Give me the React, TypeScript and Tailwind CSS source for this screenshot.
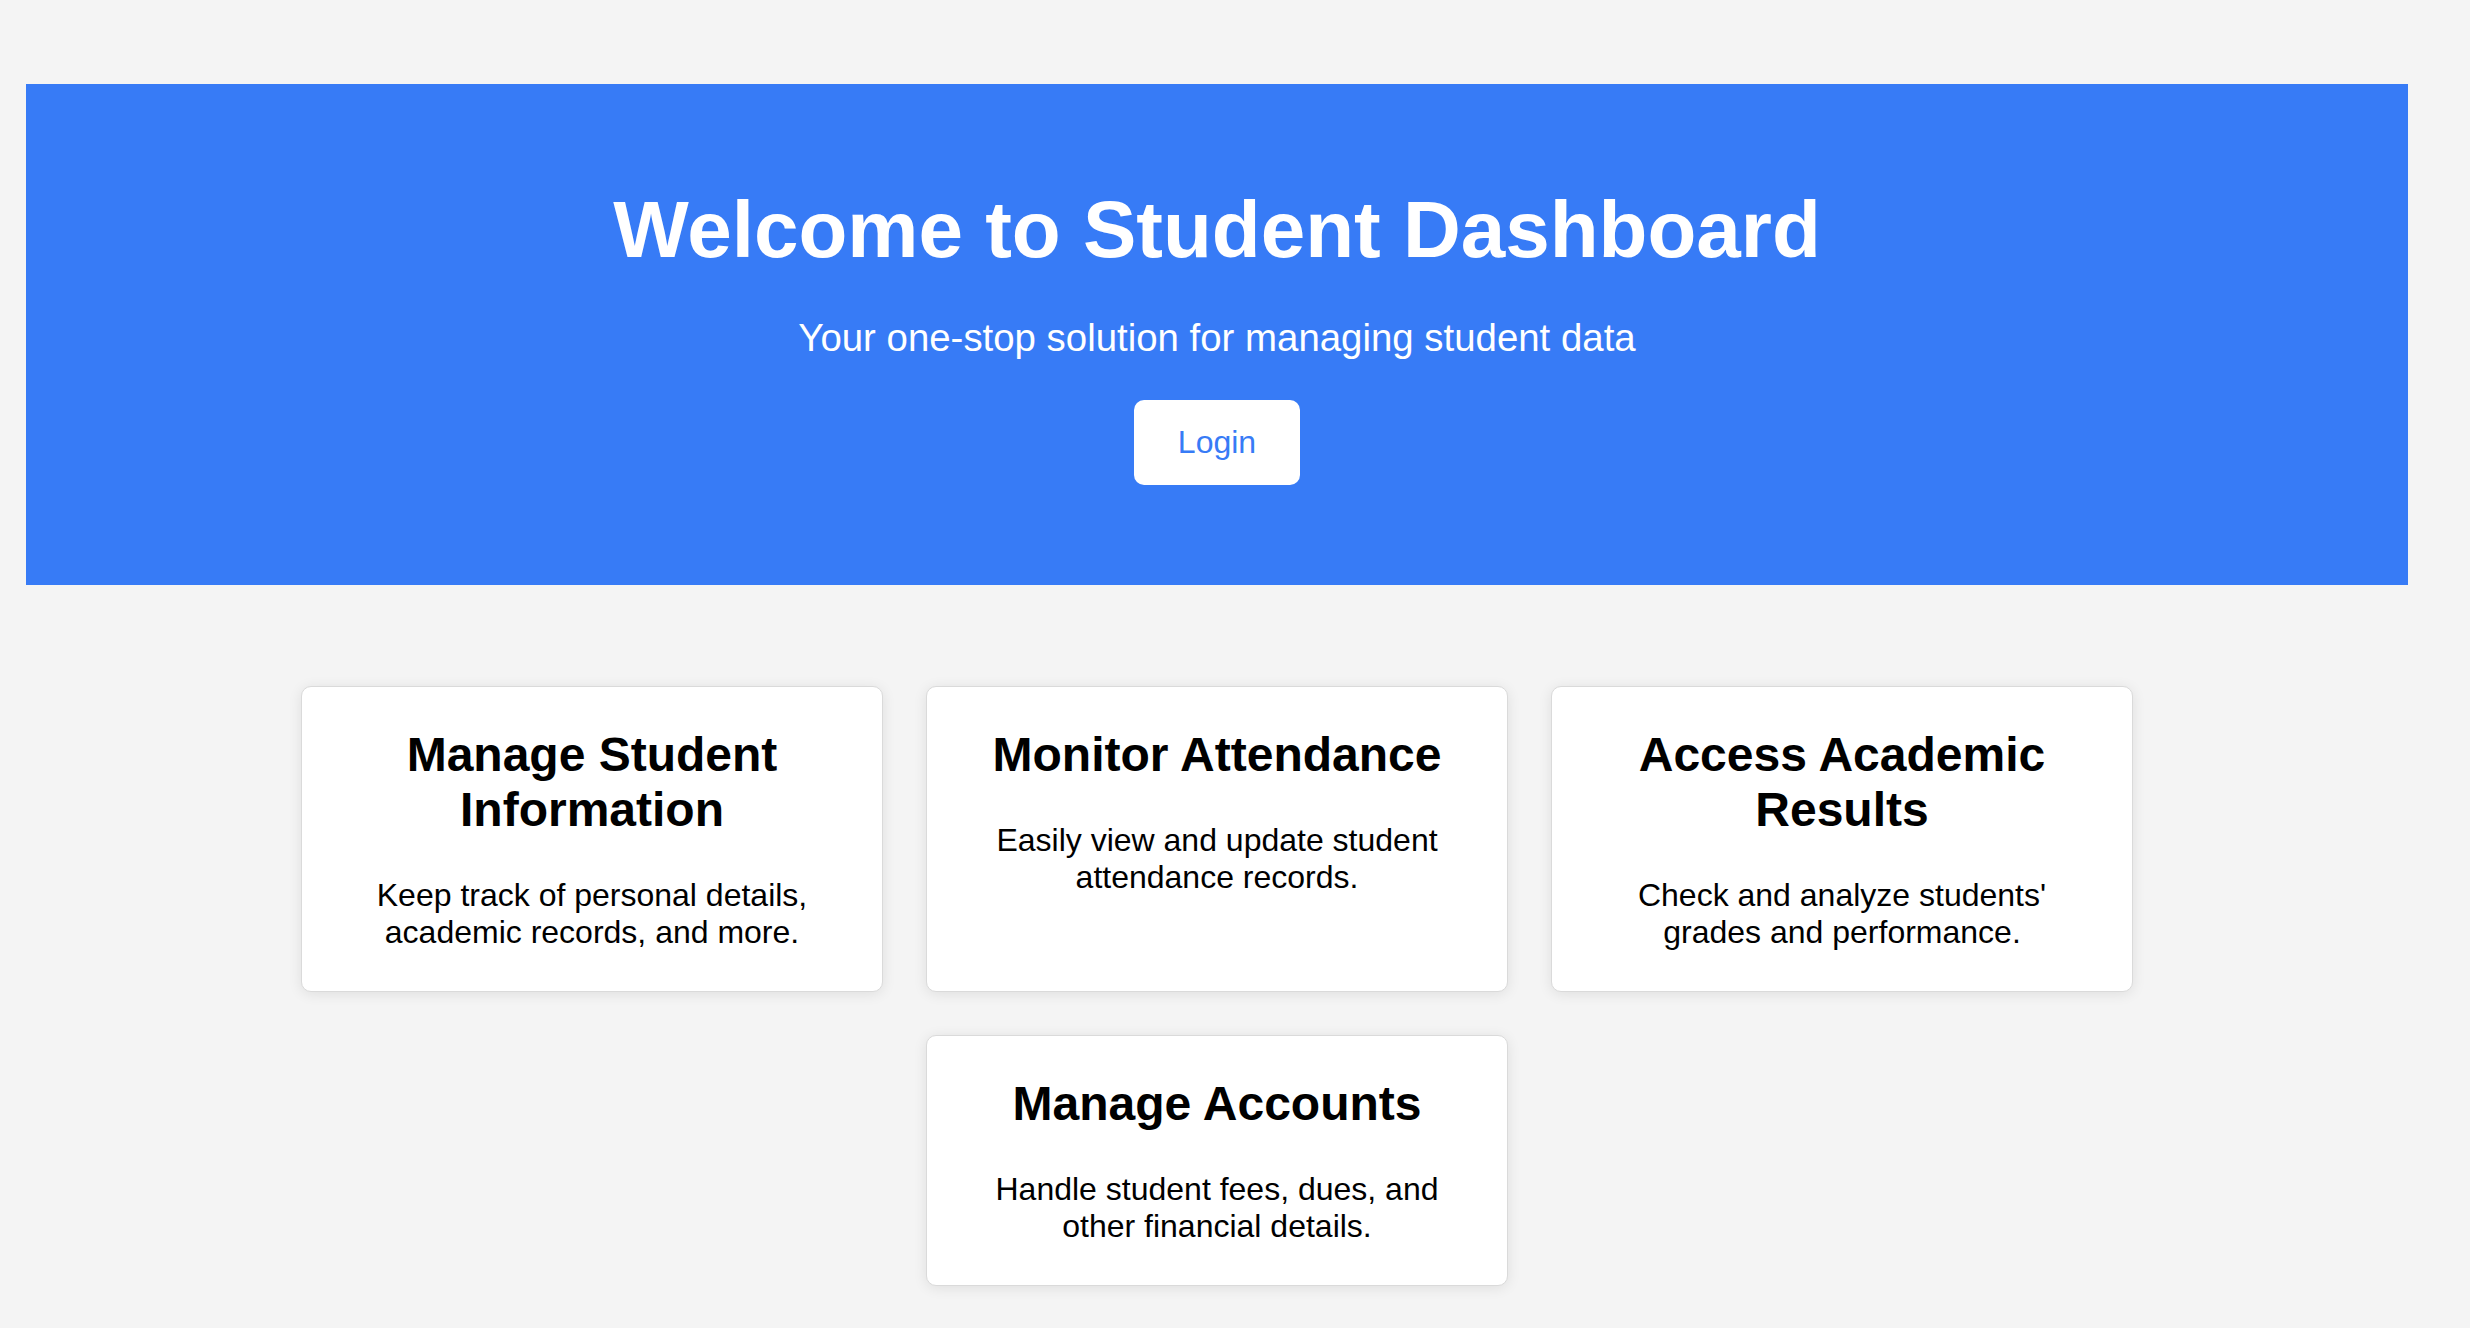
const features = [
   {
      title: "Manage Student Information",
      text: "Keep track of personal details, academic records, and more.",
   },
   {
      title: "Monitor Attendance",
      text: "Easily view and update student attendance records.",
   },
   {
      title: "Access Academic Results",
      text: "Check and analyze students' grades and performance.",
   },
   {
      title: "Manage Accounts",
      text: "Handle student fees, dues, and other financial details.",
   },
];

const FeatureCard = ({ title, text }: { title: string; text: string }) => (
   <div
      className={`
         w-[582px] p-[40px] bg-white text-center text-black
         border border-[#dadada] rounded-[10px]
         shadow-[0_2px_14px_rgba(0,0,0,0.09)]
      `}
   >
      <h3 className="m-0 text-[48px] leading-[1.15] font-bold">{title}</h3>
      <p className="mt-[40px] text-[32px] leading-[1.15]">{text}</p>
   </div>
);

export default function App() {
   return (
      <div
         className="min-h-screen bg-[#f4f4f4] pt-[84px] pl-[26px] pr-[62px] pb-[60px]"
         style={{ fontFamily: '"Liberation Sans", Arial, sans-serif' }}
      >
         <header className="bg-[#377bf6] py-[100px] flex flex-col items-center text-white text-center">
            <h1 className="text-[80px] leading-[1.15] font-bold">Welcome to Student Dashboard</h1>
            <p className="mt-[40px] text-[38.4px] leading-[1.15]">
               Your one-stop solution for managing student data
            </p>
            <button className="mt-[40px] bg-white text-[#377bf6] text-[32px] leading-[1.15] px-[44px] py-[24px] rounded-[10px]">
               Login
            </button>
         </header>

         <section className="mt-[101px] flex flex-wrap justify-center gap-[43px]">
            {features.map((f) => (
               <FeatureCard key={f.title} title={f.title} text={f.text} />
            ))}
         </section>
      </div>
   );
}
